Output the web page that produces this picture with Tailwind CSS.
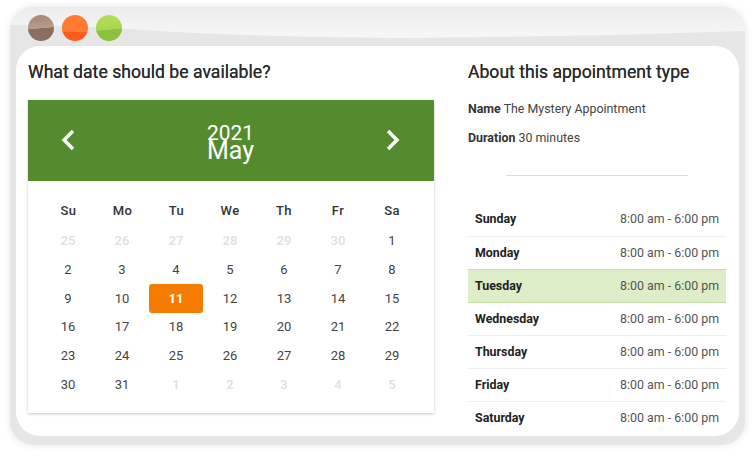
<!DOCTYPE html>
<html lang="en">
<head>
	<meta charset="UTF-8">
	<title>Availability</title>
	<script src="https://cdn.jsdelivr.net/npm/@tailwindcss/browser@4"></script>
</head>
<body class="bg-white h-screen overflow-hidden font-['Roboto',sans-serif]">
	<div class="pt-[7px] pl-[10px]">
		<!-- Window frame -->
		<div class="relative w-[735px] h-[438px] bg-[#e6e6e6] rounded-[24px] px-[6px] shadow-[0_0_8px_rgba(0,0,0,0.10)] overflow-hidden">
			<!-- Sheen on the title bar -->
			<svg class="absolute left-0 top-0" width="735" height="40" viewBox="0 0 735 40">
				<defs>
					<linearGradient id="sheen" x1="0" y1="0" x2="0" y2="1">
						<stop offset="0" stop-color="#ececec"/>
						<stop offset="1" stop-color="#f7f7f7"/>
					</linearGradient>
				</defs>
				<path d="M0 0H735V24Q560 30 390 31Q230 30 120 22Q60 18 0 18Z" fill="url(#sheen)"/>
			</svg>
			<!-- Title bar -->
			<div class="relative h-[39px] flex items-start gap-[8px] pt-[8px] pl-[12px]">
				<div class="w-[26px] h-[26px] rounded-full bg-[linear-gradient(175deg,#a68477_0%,#bb9b8c_50%,#8b6e60_52%,#8b6e60_100%)]"></div>
				<div class="w-[26px] h-[26px] rounded-full bg-[linear-gradient(180deg,#ff7a2e_0%,#ff7a2e_64%,#ff5a1f_65%,#ff5a1f_100%)]"></div>
				<div class="w-[26px] h-[26px] rounded-full bg-[linear-gradient(175deg,#b7de58_0%,#a9d64f_55%,#8cc03f_57%,#8cc03f_100%)]"></div>
			</div>
			<!-- Content card -->
			<div class="relative h-[390px] bg-white rounded-[24px] flex overflow-hidden">
				<!-- Calendar column -->
				<div class="w-[452px] pl-[12px] shrink-0">
					<h2 class="h-[53px] mb-[1px] flex items-center text-[17.6px] tracking-[0.02px] font-normal [text-shadow:0_0_0.4px_#333] text-[#2b2b2b]">What date should be available?</h2>
					<div class="w-[406px] h-[313px] bg-white shadow-[0_1px_3px_rgba(0,0,0,0.22)]">
						<div class="h-[81px] bg-[#558b2f] flex items-center justify-between pl-[32px] pr-[33px] text-white">
							<svg width="16" height="22" viewBox="0 0 16 22" fill="none" stroke="white" stroke-width="3.4" class="-mt-[2px]"><path d="M13 2 4 11l9 9"/></svg>
							<div class="text-center text-[21px] leading-[16px] mt-[5px]">
								<div>2021</div>
								<div class="text-[25px] leading-[20px]">May</div>
							</div>
							<svg width="16" height="22" viewBox="0 0 16 22" fill="none" stroke="white" stroke-width="3.4" class="-mt-[2px]"><path d="M3 2l9 9-9 9"/></svg>
						</div>
						<div class="grid grid-cols-7 w-[378px] ml-[13px] mt-[15px] text-center text-[13px] text-[#444] auto-rows-[28.8px] items-center">
							<div class="font-medium tracking-[0.4px] text-[#333] h-[28px] leading-[28px] mb-[1px] mt-[2px] pl-[1px]">Su</div><div class="font-medium tracking-[0.4px] text-[#333] h-[28px] leading-[28px] mb-[1px] mt-[2px] pl-[1px]">Mo</div><div class="font-medium tracking-[0.4px] text-[#333] h-[28px] leading-[28px] mb-[1px] mt-[2px] pl-[1px]">Tu</div><div class="font-medium tracking-[0.4px] text-[#333] h-[28px] leading-[28px] mb-[1px] mt-[2px]">We</div><div class="font-medium tracking-[0.4px] text-[#333] h-[28px] leading-[28px] mb-[1px] mt-[2px]">Th</div><div class="font-medium tracking-[0.4px] text-[#333] h-[28px] leading-[28px] mb-[1px] mt-[2px]">Fr</div><div class="font-medium tracking-[0.4px] text-[#333] h-[28px] leading-[28px] mb-[1px] mt-[2px]">Sa</div>
							<div class="pt-[3px] text-[#e0e0e0] font-medium">25</div><div class="pt-[3px] text-[#e0e0e0] font-medium">26</div><div class="pt-[3px] text-[#e0e0e0] font-medium">27</div><div class="pt-[3px] text-[#e0e0e0] font-medium">28</div><div class="pt-[3px] text-[#e0e0e0] font-medium">29</div><div class="pt-[3px] text-[#e0e0e0] font-medium">30</div><div class="pt-[3px]">1</div>
							<div class="pt-[3px]">2</div><div class="pt-[3px]">3</div><div class="pt-[3px]">4</div><div class="pt-[3px]">5</div><div class="pt-[3px]">6</div><div class="pt-[3px]">7</div><div class="pt-[3px]">8</div>
							<div class="pt-[3px]">9</div><div class="pt-[3px]">10</div><div class="mt-[3px] h-[29px] leading-[29px] bg-[#f57c00] rounded-[3px] text-white font-bold">11</div><div class="pt-[3px]">12</div><div class="pt-[3px]">13</div><div class="pt-[3px]">14</div><div class="pt-[3px]">15</div>
							<div class="pt-[3px]">16</div><div class="pt-[3px]">17</div><div class="pt-[3px]">18</div><div class="pt-[3px]">19</div><div class="pt-[3px]">20</div><div class="pt-[3px]">21</div><div class="pt-[3px]">22</div>
							<div class="pt-[3px]">23</div><div class="pt-[3px]">24</div><div class="pt-[3px]">25</div><div class="pt-[3px]">26</div><div class="pt-[3px]">27</div><div class="pt-[3px]">28</div><div class="pt-[3px]">29</div>
							<div class="pt-[3px]">30</div><div class="pt-[3px]">31</div><div class="pt-[3px] text-[#e0e0e0] font-medium">1</div><div class="pt-[3px] text-[#e0e0e0] font-medium">2</div><div class="pt-[3px] text-[#e0e0e0] font-medium">3</div><div class="pt-[3px] text-[#e0e0e0] font-medium">4</div><div class="pt-[3px] text-[#e0e0e0] font-medium">5</div>
						</div>
					</div>
				</div>
				<!-- Details column -->
				<div class="w-[258px] shrink-0">
					<h2 class="h-[53px] flex items-center text-[17.6px] font-normal [text-shadow:0_0_0.4px_#333] text-[#2b2b2b]">About this appointment type</h2>
					<p class="mt-[2px] text-[12.4px] leading-[16px] text-[#444]"><span class="font-bold text-[#333]">Name</span> The Mystery Appointment</p>
					<p class="mt-[13px] text-[12.4px] leading-[16px] text-[#444]"><span class="font-bold text-[#333]">Duration</span> 30 minutes</p>
					<hr class="w-[182px] ml-[38px] mt-[29px] border-[#ddd]">
					<div class="mt-[27px] text-[12.4px] text-[#555]">
						<div class="h-[34px] flex items-center justify-between px-[7px] border-b border-[#eee]"><span class="font-bold text-[#222]">Sunday</span><span>8:00 am - 6:00 pm</span></div>
						<div class="h-[32px] flex items-center justify-between px-[7px]"><span class="font-bold text-[#222]">Monday</span><span>8:00 am - 6:00 pm</span></div>
						<div class="h-[34px] flex items-center justify-between px-[7px] bg-[#dcedc8] border-y border-[#c5e1a5]"><span class="font-bold text-[#222]">Tuesday</span><span>8:00 am - 6:00 pm</span></div>
						<div class="h-[33px] flex items-center justify-between px-[7px] border-b border-[#eee]"><span class="font-bold text-[#222]">Wednesday</span><span>8:00 am - 6:00 pm</span></div>
						<div class="h-[33px] flex items-center justify-between px-[7px] border-b border-[#eee]"><span class="font-bold text-[#222]">Thursday</span><span>8:00 am - 6:00 pm</span></div>
						<div class="h-[33px] flex items-center justify-between px-[7px] border-b border-[#eee]"><span class="font-bold text-[#222]">Friday</span><span>8:00 am - 6:00 pm</span></div>
						<div class="h-[33px] flex items-center justify-between px-[7px]"><span class="font-bold text-[#222]">Saturday</span><span>8:00 am - 6:00 pm</span></div>
					</div>
				</div>
			</div>
		</div>
	</div>
</body>
</html>
